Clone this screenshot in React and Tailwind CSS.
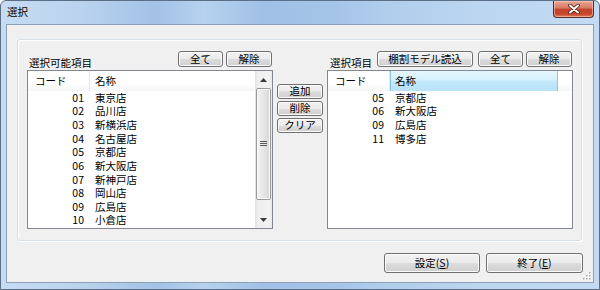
import React from "react";

const leftRows = [
  ["01", "東京店"],
  ["02", "品川店"],
  ["03", "新横浜店"],
  ["04", "名古屋店"],
  ["05", "京都店"],
  ["06", "新大阪店"],
  ["07", "新神戸店"],
  ["08", "岡山店"],
  ["09", "広島店"],
  ["10", "小倉店"],
];

const rightRows = [
  ["05", "京都店"],
  ["06", "新大阪店"],
  ["09", "広島店"],
  ["11", "博多店"],
];

function Btn({ children, className = "" }) {
  return (
    <button
      type="button"
      className={
        "flex items-center justify-center rounded-[3px] border border-[#707070] bg-[linear-gradient(#f2f2f2_0%,#ebebeb_50%,#dddddd_50%,#cfcfcf_100%)] shadow-[inset_0_0_0_1px_#fbfbfb] text-[10.5px] leading-none text-black " +
        className
      }
    >
      {children}
    </button>
  );
}

function Rows({ rows }) {
  return (
    <div className="flex flex-col">
      {rows.map(([c, n]) => (
        <div key={c} className="flex h-[13.67px] items-center text-[10.5px] leading-none">
          <div className="w-[62px] pr-[6px] text-right">{c}</div>
          <div className="pl-[5px]">{n}</div>
        </div>
      ))}
    </div>
  );
}

function Scrollbar() {
  return (
    <div className="flex w-[17px] flex-col bg-[linear-gradient(90deg,#e2e3e4,#efefef_20%,#f2f2f2_80%,#e9e9e9)]">
      <div className="flex h-[17px] items-center justify-center">
        <svg width="7" height="4" viewBox="0 0 7 4">
          <path d="M0 4 L3.5 0 L7 4 Z" fill="#3a3a3a" />
        </svg>
      </div>
      <div className="flex-1 px-[1px]">
        <div className="flex h-[112px] items-center justify-center rounded-[2px] border border-[#9a9a9a] bg-[linear-gradient(90deg,#f4f4f4,#e6e6e6_50%,#d6d6d6)] shadow-[inset_0_0_0_1px_#fafafa]">
          <svg width="7" height="6" viewBox="0 0 7 6">
            <rect x="0" y="0" width="7" height="1" fill="#5a5a5a" />
            <rect x="0" y="2" width="7" height="1" fill="#5a5a5a" />
            <rect x="0" y="4" width="7" height="1" fill="#5a5a5a" />
          </svg>
        </div>
      </div>
      <div className="flex h-[17px] items-center justify-center">
        <svg width="7" height="4" viewBox="0 0 7 4">
          <path d="M0 0 L3.5 4 L7 0 Z" fill="#3a3a3a" />
        </svg>
      </div>
    </div>
  );
}

function Header({ highlight }) {
  return (
    <div className="flex h-[20px] bg-[linear-gradient(#ffffff,#ffffff_60%,#f5f6f7)] text-[10.5px] leading-none">
      <div className="flex w-[62px] items-center border-r border-[#e5e5e5] pl-[7px]">コード</div>
      {highlight ? (
        <>
          <div className="flex w-[168px] items-center border-x border-[#88c6e6] bg-[linear-gradient(#e4f6fe,#d8f1fd_45%,#c3e8fb_50%,#b8e2f8)] pl-[4px]">
            名称
          </div>
          <div className="flex-1" />
        </>
      ) : (
        <div className="flex flex-1 items-center pl-[5px]">名称</div>
      )}
    </div>
  );
}

export default function App() {
  return (
    <div className="relative h-[290px] w-[600px] overflow-hidden rounded-t-[6px] border border-[#5b6f87] bg-[linear-gradient(90deg,#c7dcf3_0%,#b9d2ee_14%,#a3c2e6_26%,#b7d2ef_34%,#a0c0e5_44%,#a4c4e8_55%,#b0cdec_64%,#bcd6f1_80%,#c3daf2_100%)] font-['Noto_Sans_CJK_JP',sans-serif] text-black">
      {/* title bar */}
      <div className="flex h-[23px] items-start justify-between pl-[6px] pr-[5px]">
        <div className="pt-[6px] text-[10.5px] leading-none text-black">選択</div>
        <div className="flex h-[17px] w-[41px] items-center justify-center rounded-b-[4px] border border-t-0 border-[#5b2a24] bg-[linear-gradient(#e8a593,#d67863_45%,#c2452d_50%,#c7442a_80%,#e07a5c)] shadow-[inset_0_0_0_1px_rgba(255,220,210,0.5)]">
          <svg width="12" height="10" viewBox="0 0 12 10">
            <path d="M2 1.5 L10 8.5 M10 1.5 L2 8.5" stroke="#4a1d18" strokeWidth="3.6" strokeLinecap="round" />
            <path d="M2 1.5 L10 8.5 M10 1.5 L2 8.5" stroke="#ffffff" strokeWidth="2" strokeLinecap="round" />
          </svg>
        </div>
      </div>

      {/* client */}
      <div className="ml-[5px] h-[259px] w-[588px] border border-[#8d9fb6] bg-[#f0f0f0]">
        <div className="flex flex-col pl-[10px] pr-[10px] pt-[14px]">
          {/* group box */}
          <div className="flex h-[202px] w-[565px] rounded-[3px] border border-[#d5dfe5] pl-[9px] pt-[11px] shadow-[inset_1px_1px_0_#ffffff,1px_1px_0_#ffffff]">
            {/* left panel */}
            <div className="flex w-[246px] flex-col">
              <div className="flex h-[16px] items-end justify-between pr-[1px]">
                <div className="pl-[2px] text-[10.5px] leading-none mb-[-1px]">選択可能項目</div>
                <div className="flex h-[16px] gap-[3px]">
                  <Btn className="w-[45px]">全て</Btn>
                  <Btn className="w-[46px]">解除</Btn>
                </div>
              </div>
              <div className="mt-[3px] flex h-[159px] border border-[#828790] bg-white">
                <div className="flex flex-1 flex-col">
                  <Header />
                  <Rows rows={leftRows} />
                </div>
                <Scrollbar />
              </div>
            </div>

            {/* middle buttons */}
            <div className="ml-[4px] mt-[33px] flex w-[46px] flex-col gap-[2px]">
              <Btn className="h-[15px] w-[46px]">追加</Btn>
              <Btn className="h-[15px] w-[46px]">削除</Btn>
              <Btn className="h-[15px] w-[46px]">クリア</Btn>
            </div>

            {/* right panel */}
            <div className="ml-[4px] flex w-[246px] flex-col">
              <div className="flex h-[16px] items-end pr-[1px]">
                <div className="pl-[3px] text-[10.5px] leading-none mb-[-1px]">選択項目</div>
                <div className="ml-auto flex h-[16px]">
                  <Btn className="w-[96px]">棚割モデル読込</Btn>
                  <Btn className="ml-[5px] w-[45px]">全て</Btn>
                  <Btn className="ml-[3px] w-[46px]">解除</Btn>
                </div>
              </div>
              <div className="mt-[3px] flex h-[159px] flex-col border border-[#828790] bg-white">
                <Header highlight />
                <Rows rows={rightRows} />
              </div>
            </div>
          </div>

          {/* bottom buttons */}
          <div className="mt-[12px] flex justify-end gap-[6px] pr-[0px]">
            <Btn className="h-[20px] w-[96px]">
              設定(<span className="underline">S</span>)
            </Btn>
            <Btn className="h-[20px] w-[97px]">
              終了(<span className="underline">E</span>)
            </Btn>
          </div>
        </div>
      </div>

      {/* resize grip */}
      <svg className="absolute bottom-[9px] right-[8px]" width="8" height="8" viewBox="0 0 8 8">
        {[
          [6, 0],
          [6, 3],
          [3, 3],
          [6, 6],
          [3, 6],
          [0, 6],
        ].map(([x, y]) => (
          <g key={x + "-" + y}>
            <rect x={x + 1} y={y + 1} width="1.5" height="1.5" fill="#ffffff" />
            <rect x={x} y={y} width="1.5" height="1.5" fill="#a9a9a9" />
          </g>
        ))}
      </svg>
    </div>
  );
}
